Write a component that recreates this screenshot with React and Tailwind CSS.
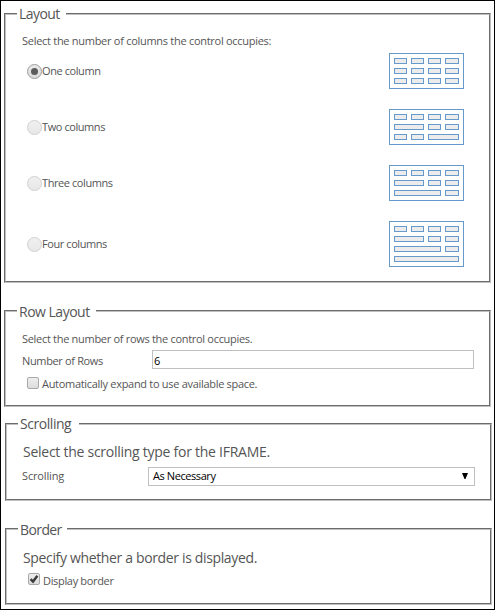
const COLS = [
  { x: 5, end: 18 },
  { x: 22, end: 35 },
  { x: 39, end: 52 },
  { x: 56, end: 70 },
];

// Each row lists [first column, last column] spans.
const ONE = [[0, 0], [1, 1], [2, 2], [3, 3]];
const DOUBLE_LEFT = [[0, 1], [2, 2], [3, 3]];
const DOUBLE_RIGHT = [[0, 0], [1, 1], [2, 3]];
const TRIPLE = [[0, 2], [3, 3]];
const FULL = [[0, 3]];

const OPTIONS = [
  { label: "One column", checked: true, rows: [ONE, ONE, ONE] },
  { label: "Two columns", rows: [ONE, DOUBLE_LEFT, DOUBLE_RIGHT] },
  { label: "Three columns", rows: [ONE, DOUBLE_LEFT, TRIPLE] },
  { label: "Four columns", rows: [ONE, DOUBLE_LEFT, TRIPLE, FULL] },
];

function Diagram({ rows }) {
  const h = rows.length * 10 + 6;
  return (
    <svg width="75" height={h} className="block shrink-0" shapeRendering="crispEdges">
      <rect x="0.5" y="0.5" width="74" height={h - 1} fill="#fff" stroke="#6699cc" />
      {rows.map((spans, r) =>
        spans.map(([a, b]) => (
          <rect
            key={`${r}-${a}`}
            x={COLS[a].x + 0.5}
            y={r * 10 + 5.5}
            width={COLS[b].end - COLS[a].x - 1}
            height="5"
            fill="#ececec"
            stroke="#6699cc"
          />
        ))
      )}
    </svg>
  );
}

function Radio({ checked }) {
  return (
    <span
      className={
        checked
          ? "flex size-[15px] shrink-0 items-center justify-center rounded-full border border-[#9c9c9c] bg-linear-to-b from-[#e9e9e9] to-[#dcdcdc]"
          : "flex size-[15px] shrink-0 items-center justify-center rounded-full border border-[#d0d0d0] bg-linear-to-b from-[#f0f0f0] to-[#e8e8e8]"
      }
    >
      {checked && <span className="size-[7px] rounded-full bg-[#5c5c5c]" />}
    </span>
  );
}

function Check({ checked }) {
  return (
    <span className="flex size-[12px] shrink-0 items-center justify-center rounded-[2px] border border-[#a8a8a8] bg-linear-to-b from-[#eeeeee] to-[#dcdcdc]">
      {checked && (
        <svg width="10" height="10" viewBox="0 0 10 10" className="shrink-0">
          <path d="M1.6 5.2 4 7.6 8.4 1.8" fill="none" stroke="#3c3c3c" strokeWidth="2.4" />
        </svg>
      )}
    </span>
  );
}

function Group({ title, titleClass, className, children }) {
  return (
    <section className={`border border-t-[#6c6c6c] border-l-[#6c6c6c] border-r-[#c0c0c0] border-b-[#c0c0c0] ${className}`}>
      <div className="h-full border border-t-[#c0c0c0] border-l-[#c0c0c0] border-r-[#6c6c6c] border-b-[#6c6c6c]">
        <h2
          className={`-mt-[11px] ml-[11px] h-[20px] bg-white pl-[2px] text-[14px] whitespace-nowrap text-[#555] ${titleClass}`}
        >
          {title}
        </h2>
        {children}
      </div>
    </section>
  );
}

export default function App() {
  return (
    <main className="h-[610px] w-[495px] overflow-hidden border border-black bg-white pt-[12px] pl-[3px] font-['Open_Sans','Noto_Sans',sans-serif] text-[11px] leading-[16px] tracking-[-0.28px] whitespace-nowrap text-[#555]">
      <Group title="Layout" titleClass="w-[49px] leading-[20px] tracking-[-0.55px]" className="h-[270px] w-[487px]">
        <p className="mt-[9px] ml-[16px]">Select the number of columns the control occupies:</p>
        <div className="mt-[4px] mr-[25px] ml-[21px] flex flex-col gap-[20px] tracking-[-0.42px]">
          {OPTIONS.map((o) => (
            <label key={o.label} className="flex items-center justify-between">
              <span className="flex items-center">
                <Radio checked={o.checked} />
                <span>{o.label}</span>
              </span>
              <Diagram rows={o.rows} />
            </label>
          ))}
        </div>
      </Group>

      <Group title="Row Layout" titleClass="w-[79px] leading-[22px] tracking-[-0.5px]" className="mt-[27px] h-[97px] w-[487px]">
        <p className="mt-[10px] ml-[16px] tracking-[-0.3px]">Select the number of rows the control occupies.</p>
        <div className="mt-[3px] mr-[15px] ml-[16px] flex h-[19px] items-center">
          <span className="w-[130px] pt-[2px] tracking-[-0.35px]">Number of Rows</span>
          <span className="h-[19px] flex-1 border border-[#c0c0c0] pl-px leading-[19px] text-black">6</span>
        </div>
        <label className="mt-[4px] ml-[21px] flex items-center gap-[3px]">
          <Check />
          <span className="pt-[3px] tracking-[-0.3px]">Automatically expand to use available space.</span>
        </label>
      </Group>

      <Group title="Scrolling" titleClass="w-[61px] leading-[20px] tracking-[-0.45px]" className="mt-[16px] ml-px h-[78px] w-[487px]">
        <p className="mt-[8px] ml-[16px] text-[14px] leading-[20px] tracking-[-0.26px]">Select the scrolling type for the IFRAME.</p>
        <div className="mt-[5px] mr-[15px] ml-[15px] flex h-[19px] items-center">
          <span className="w-[126px] pb-px tracking-[-0.15px]">Scrolling</span>
          <span className="flex h-[19px] flex-1 items-center justify-between border border-[#c0c0c0] pr-[6px] pl-[4px] tracking-[-0.42px] text-black">
            <span className="pb-[2px]">As Necessary</span>
            <svg width="6" height="6" className="mb-px">
              <path d="M0 0h6L3.5 6h-1z" fill="#000" />
            </svg>
          </span>
        </div>
      </Group>

      <Group title="Border" titleClass="w-[49px] leading-[22px] tracking-[-0.6px]" className="mt-[27px] ml-px h-[77px] w-[487px]">
        <p className="mt-[9px] ml-[16px] text-[14px] leading-[20px] tracking-[-0.35px]">Specify whether a border is displayed.</p>
        <label className="mt-[1px] ml-[21px] flex items-center gap-[3px]">
          <Check checked />
          <span className="pt-[4px] tracking-[-0.33px]">Display border</span>
        </label>
      </Group>
    </main>
  );
}
